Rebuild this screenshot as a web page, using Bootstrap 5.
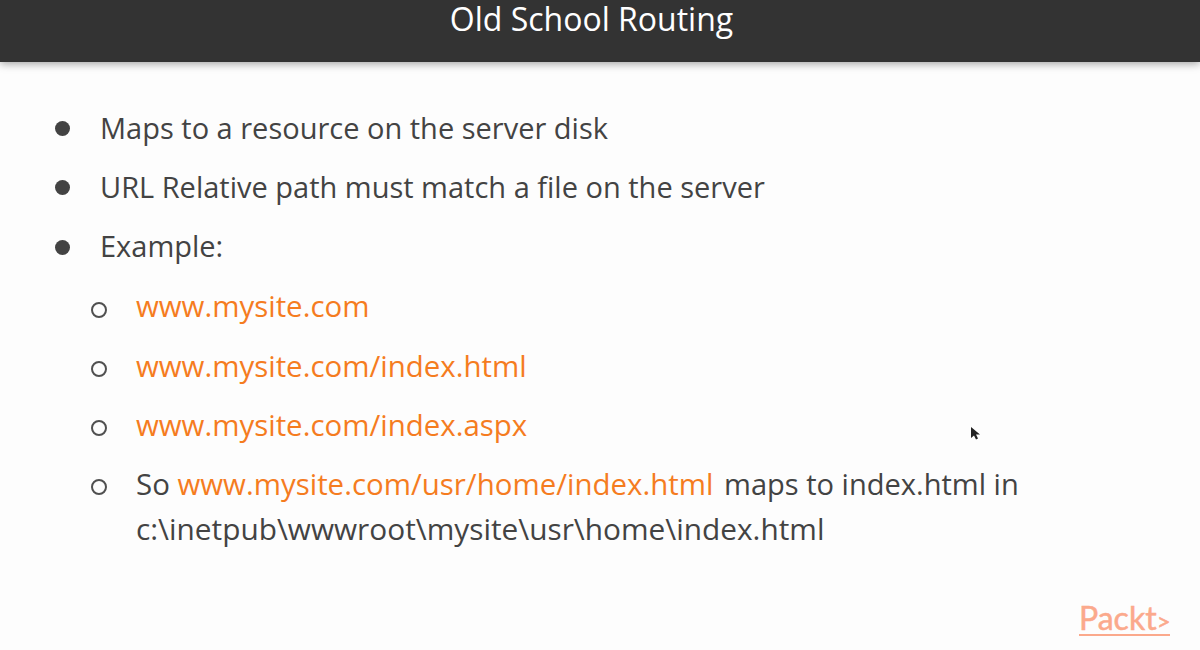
<!DOCTYPE html>
<html lang="en"><head><meta charset="utf-8">
<link href="https://cdn.jsdelivr.net/npm/bootstrap@5.3.0/dist/css/bootstrap.min.css" rel="stylesheet">
<style>
html,body{height:650px;overflow:hidden;background:#fdfdfd}
body{font-family:"Open Sans",sans-serif;color:#434343;position:relative}
.titlebar{height:62px;background:#333;color:#fff;font-size:32px;line-height:37px;padding-right:17px;box-shadow:0 2px 8px rgba(0,0,0,.35)}
.slide-list{list-style:none;margin:0;padding:36px 0 0 55px;font-size:29px}
.slide-list>li{display:flex;align-items:center;height:59.3px}
.slide-list>li.first-sub{margin-top:1px}
.dot{width:15px;height:15px;border-radius:50%;background:#434343;margin-right:30px;flex:none;position:relative;top:1px}
.ring{width:16px;height:16px;border-radius:50%;border:2px solid #505050;margin:0 29px 0 36px;flex:none;position:relative;top:3px}
.orange{color:#f57c1f}
.wide{font-size:29.45px}
.tail{font-size:29.05px;margin-left:3px}
.slide-list>li.path-row{font-size:29.8px;padding-left:81px;height:30px}
.packt{position:absolute;left:1079px;top:600px;width:91px;font-family:"Lato",sans-serif;font-size:32px;line-height:36px;height:36px;color:#fba98c;border-bottom:2.5px solid #fba98c;white-space:nowrap;-webkit-text-stroke:.5px #fba98c}
.chev{font-size:24px}
.cursor{position:absolute;left:970px;top:426px}
</style></head><body>
<header class="titlebar text-center">Old School Routing</header>
<ul class="slide-list">
<li><span class="dot"></span>Maps to a resource on the server disk</li>
<li><span class="dot"></span>URL Relative path must match a file on the server</li>
<li><span class="dot"></span>Example:</li>
<li class="wide first-sub"><span class="ring"></span><span class="orange">www.mysite.com</span></li>
<li class="wide"><span class="ring"></span><span class="orange">www.mysite.com/index.html</span></li>
<li class="wide"><span class="ring"></span><span class="orange">www.mysite.com/index.aspx</span></li>
<li class="wide"><span class="ring"></span><span>So <span class="orange">www.mysite.com/usr/home/index.html</span> <span class="tail">maps to index.html in</span></span></li>
<li class="path-row">c:\inetpub\wwwroot\mysite\usr\home\index.html</li>
</ul>
<div class="packt">Packt<span class="chev">&gt;</span></div>
<svg class="cursor" width="12" height="16" viewBox="0 0 12 16"><path d="M1 1v11l3-2.5 2 4 2-1-2-4h4z" fill="#222"/></svg>
</body></html>
